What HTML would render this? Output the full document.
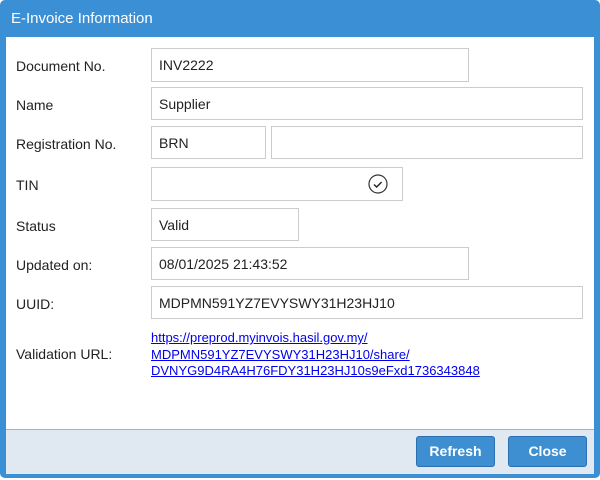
<!DOCTYPE html>
<html><head><style>
body{margin:0;width:600px;height:480px;background:#fff;font-family:"Liberation Sans",Arial,sans-serif;position:relative;overflow:hidden}
.frame{position:absolute;left:0;top:0;width:600px;height:478px;background:#3a8fd5;border-radius:5px}
.title{position:absolute;left:11px;top:10px;color:#fff;font-size:15px}
.content{position:absolute;left:6px;top:37px;width:588px;height:392px;background:#fff}
.footer{position:absolute;left:6px;top:429px;width:588px;height:45px;background:#e0e9f2;border-top:1px solid #9ab6d2;box-sizing:border-box}
.lbl{position:absolute;left:16px;font-size:14px;color:#222}
.in{position:absolute;border:1px solid #ccc;box-sizing:border-box;font-size:14px;color:#222;padding-left:7px;line-height:32px;background:#fff}
.btn{position:absolute;top:436px;width:79px;height:31px;background:#3d8fd2;border:1px solid #2a70b0;border-radius:3px;box-sizing:border-box;color:#fff;font-weight:bold;font-size:14px;text-align:center;line-height:29px}
a{color:#0000ee;font-size:13px;text-decoration:underline;position:absolute;left:151px;line-height:16.5px}
</style></head><body>
<div class="frame"></div>
<div class="title">E-Invoice Information</div>
<div class="content"></div>
<div class="footer"></div>
<div class="lbl" style="top:58px">Document No.</div><div class="in" style="left:151px;top:48px;width:318px;height:34px">INV2222</div>
<div class="lbl" style="top:97px">Name</div><div class="in" style="left:151px;top:87px;width:432px;height:33px">Supplier</div>
<div class="lbl" style="top:136px">Registration No.</div><div class="in" style="left:151px;top:126px;width:115px;height:33px">BRN</div><div class="in" style="left:271px;top:126px;width:312px;height:33px"></div>
<div class="lbl" style="top:177px">TIN</div><div class="in" style="left:151px;top:167px;width:252px;height:34px"></div>
<svg style="position:absolute;left:367px;top:173px" width="22" height="22" viewBox="0 0 22 22"><circle cx="11" cy="11" r="9" fill="none" stroke="#333" stroke-width="1.2"/><path d="M7 11.5l2.6 2.5 5-5" fill="none" stroke="#222" stroke-width="1.4"/></svg>
<div class="lbl" style="top:218px">Status</div><div class="in" style="left:151px;top:208px;width:148px;height:33px">Valid</div>
<div class="lbl" style="top:257px">Updated on:</div><div class="in" style="left:151px;top:247px;width:318px;height:33px">08/01/2025 21:43:52</div>
<div class="lbl" style="top:296px">UUID:</div><div class="in" style="left:151px;top:286px;width:432px;height:33px">MDPMN591YZ7EVYSWY31H23HJ10</div>
<div class="lbl" style="top:346px">Validation URL:</div>
<a style="top:330px">https://preprod.myinvois.hasil.gov.my/<br>MDPMN591YZ7EVYSWY31H23HJ10/share/<br>DVNYG9D4RA4H76FDY31H23HJ10s9eFxd1736343848</a>
<div class="btn" style="left:416px">Refresh</div>
<div class="btn" style="left:508px">Close</div>
</body></html>
